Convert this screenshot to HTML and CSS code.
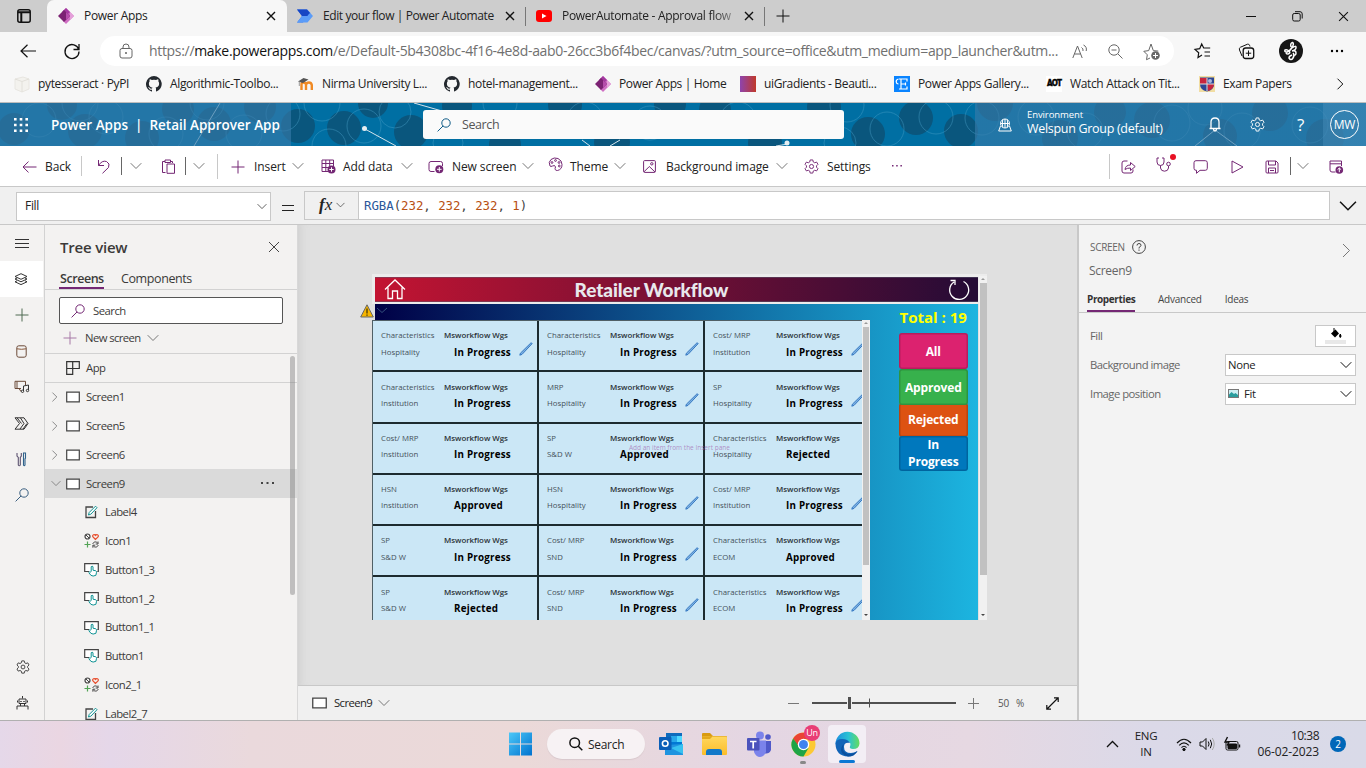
FILE: index.html
```html
<!DOCTYPE html>
<html lang="en">
<head>
<meta charset="utf-8">
<title>Power Apps</title>
<link rel="stylesheet" href="styles.css">
</head>
<body>
<svg class="defs" width="0" height="0">
  <defs>
    <linearGradient id="edgeA" x1="0" y1="0" x2="1" y2="0"><stop offset="0" stop-color="#1d8fe0"/><stop offset=".55" stop-color="#2bc3d2"/><stop offset="1" stop-color="#66dc5c"/></linearGradient>
    <linearGradient id="winG" x1="0" y1="0" x2="1" y2="1"><stop offset="0" stop-color="#4cc8f8"/><stop offset="1" stop-color="#0072cf"/></linearGradient>
    <linearGradient id="fold" x1="0" y1="0" x2="0" y2="1"><stop offset="0" stop-color="#ffd75e"/><stop offset="1" stop-color="#fbbd2a"/></linearGradient>
  </defs>
  <symbol id="x" viewBox="0 0 10 10"><path d="M1 1l8 8M9 1l-8 8"/></symbol>
  <symbol id="down" viewBox="0 0 12 8"><path d="M.7 1.2L6 6.5l5.300-5.300"/></symbol>
  <symbol id="right" viewBox="0 0 8 12"><path d="M1.500.7L6.800 6 1.500 11.300"/></symbol>
  <symbol id="plus" viewBox="0 0 14 14"><path d="M7 .5v13M.5 7h13"/></symbol>
  <symbol id="glass" viewBox="0 0 14 14"><circle cx="9" cy="5" r="4.200"/><path d="M6 8L.6 13.400"/></symbol>
  <symbol id="gear" viewBox="0 0 16 16"><circle cx="8" cy="8" r="2.200"/><path d="M6.600 1h2.800l.5 2.200 1.500.8 2.100-.7 1.400 2.400-1.600 1.600v1.400l1.600 1.600-1.400 2.400-2.100-.7-1.500.8-.5 2.200H6.600l-.5-2.200-1.500-.8-2.100.7-1.400-2.400 1.600-1.600V7.300L1.100 5.700l1.400-2.400 2.100.7 1.500-.8z"/></symbol>
  <symbol id="pa" viewBox="0 0 16 16"><path d="M5.500 2.500L8 0l8 8-8 8-2.500-2.500z" fill="#cf6fc3"/><path d="M8 0l4 4-4 4-4-4z" fill="#a33aa0"/><path d="M6 2l6 6-6 6-6-6z" fill="#7c2273"/><path d="M8 4l4 4-4 4z" fill="#b64cab"/><path d="M12 4l4 4-4 4z" fill="#e5a0da"/></symbol>
  <symbol id="gh" viewBox="0 0 16 16"><path fill="#24292f" d="M8 0a8 8 0 0 0-2.500 15.600c.4.1.5-.2.5-.4v-1.500c-2.200.5-2.700-1-2.700-1-.4-.9-.9-1.200-.9-1.200-.7-.5.100-.5.100-.5.800.1 1.200.8 1.200.8.700 1.200 1.900.9 2.300.7.100-.5.300-.9.500-1.100-1.800-.2-3.600-.9-3.600-4 0-.9.300-1.600.8-2.100-.1-.2-.4-1 .1-2.100 0 0 .7-.2 2.200.8a7.700 7.700 0 0 1 4 0c1.500-1 2.200-.8 2.200-.8.400 1.100.2 1.900.1 2.100.5.600.8 1.300.8 2.100 0 3.100-1.900 3.700-3.600 3.900.3.300.5.800.5 1.500v2.300c0 .2.100.5.500.4A8 8 0 0 0 8 0z"/></symbol>
  <symbol id="scr" viewBox="0 0 14 12"><path d="M.7 1.200h12.600v9.600H.7z" fill="#fff" stroke="#444" stroke-width="1.200"/></symbol>
  <symbol id="lbl" viewBox="0 0 14 14"><path d="M9 2H2v10.500h9.500V6" fill="none" stroke="#444" stroke-width="1.300"/><path d="M4.500 10l.7-2.500L11.500 1.200l1.500 1.500L6.800 9.200z" fill="#fff" stroke="#0c9293"/></symbol>
  <symbol id="ico" viewBox="0 0 15 15"><circle cx="3.500" cy="3.500" r="2.500" fill="none" stroke="#444" stroke-width="1.200"/><path d="M2 2l3 3" stroke="#444"/><path d="M11.500 6.500L8.800 3.700c-.7-2 1.700-2.800 2.700-1.300 1-1.500 3.400-.7 2.700 1.300z" fill="none" stroke="#e8502f" stroke-width="1.200"/><path d="M3.500 8.500v6M.5 11.500h6" stroke="#52a356" stroke-width="1.200"/><path d="M8.800 11c.5-2.500 3.800-2.700 4.900-.8M14 8.500V11h-2.300M14.200 12c-.5 2.500-3.800 2.700-4.900.8M8.900 14.700v-2.500h2.300" fill="none" stroke="#444"/></symbol>
  <symbol id="btn" viewBox="0 0 15 15"><path d="M5 9.500H.7V1.700h13.600v7.800h-1" fill="#fff" stroke="#444" stroke-width="1.200"/><path d="M7.200 9.500V4.700q.9-1 1.800 0v3.500l2.800.6q.9.400.7 1.500l-.6 3q-3 1.500-5 0L4.800 10.500q.7-1 1.500-.4z" fill="#fff" stroke="#0c9293"/></symbol>
  <symbol id="pen" viewBox="0 0 14 14"><path d="M.8 13.200l.6-2L11.800 1q.9-.5 1.300.7L3 12.400z" fill="#7fb2e2" stroke="#2b70bd" stroke-width=".9"/></symbol>
</svg>

<div class="tabs">
  <svg class="i dk" width="14" height="14" viewBox="0 0 14 14"><rect x=".8" y=".8" width="12.400" height="12.400" rx="2" stroke-width="1.500"/><path d="M1 3.200h12M4.300 4v9" stroke-width="2"/></svg>
  <div class="tab active"><svg width="16" height="16"><use href="#pa"/></svg><span>Power Apps</span><svg class="i dk b" width="10" height="10"><use href="#x"/></svg></div>
  <div class="tab"><svg width="16" height="16" viewBox="0 0 16 16"><path d="M0 1.500h10l3.500 3.500L6 14.500H0L5 8z" fill="#2b6ff0"/><path d="M10 1.500L16 8l-5.500 6.500H0L5 8h6z" fill="#5b9cf8"/><path d="M0 1.500h10L13 5l-3 3H5z" fill="#1746c4"/></svg><span class="t2">Edit your flow | Power Automate</span><svg class="i dk b" width="10" height="10"><use href="#x"/></svg></div>
  <div class="tab third"><svg width="16" height="16" viewBox="0 0 16 16"><rect y="2" width="16" height="12" rx="3" fill="#f00"/><path d="M6 5.500v5L10.500 8z" fill="#fff"/></svg><span class="fade">PowerAutomate - Approval flow</span><svg class="i dk b" width="10" height="10"><use href="#x"/></svg></div>
  <svg class="i dk" width="14" height="14"><use href="#plus"/></svg>
  <svg class="i dk" width="10" height="10"><path d="M0 5.500h10"/></svg>
  <svg class="i dk" width="11" height="11" viewBox="0 0 11 11"><rect x=".7" y="2.500" width="7.500" height="7.500" rx="1.500"/><path d="M3 .7h5q2.200 0 2.200 2.200v4.600"/></svg>
  <svg class="i dk" width="11" height="11"><use href="#x"/></svg>
</div>

<div class="address">
  <svg class="i dk" width="16" height="14" viewBox="0 0 16 14"><path d="M16 7H1M7.500.7L1 7l6.500 6.300" stroke-width="1.200"/></svg>
  <svg class="i dk" width="16" height="16" viewBox="0 0 16 16"><path d="M14.700 6.500A7 7 0 1 0 15 8.500M15 1v5.500H9.500" stroke-width="1.300"/></svg>
  <div class="url">
    <svg class="i gr" width="14" height="16" viewBox="0 0 14 16"><rect x="1" y="5.500" width="12" height="9.500" rx="2"/><path d="M4 5.500V4q0-3 3-3t3 3v1.500"/><circle cx="7" cy="10" r=".6" fill="#555"/></svg>
    <span class="url-text">https://<b>make.powerapps.com</b>/e/Default-5b4308bc-4f16-4e8d-aab0-26cc3b6f4bec/canvas/?utm_source=office&amp;utm_medium=app_launcher&amp;utm...</span>
    <svg class="i gr" width="16" height="15" viewBox="0 0 16 15"><path d="M.8 14L5.500 2l4.700 12M2.500 10h6M9.500 3.500q2 1 1.500 3.500M11.500 1q3.700 1.800 2.700 6"/></svg>
    <svg class="i gr" width="15" height="15" viewBox="0 0 15 15"><circle cx="6" cy="6" r="5.200"/><path d="M3.500 6h5M10 10l4.500 4.500"/></svg>
    <svg class="i gr" width="18" height="17" viewBox="0 0 18 17"><path d="M7 15l-3.500 1.700.8-4.900L.8 8.300l4.900-.7L8 1l2.300 6.600 5 .5"/><circle cx="12.500" cy="12.500" r="4.300" fill="#666" stroke="none"/><path d="M12.500 10v5M10 12.500h5" stroke="#fff"/></svg>
  </div>
  <svg class="i dk" width="17" height="16" viewBox="0 0 17 16"><path d="M8 12l-4 2.500.7-4.700L1 6.500l4.700-.8L7.700 1l2 4h6.500M10.500 9H16M10.500 13H16" stroke-width="1.200"/></svg>
  <svg class="i dk" width="17" height="17" viewBox="0 0 17 17"><path d="M4 13L1.500 7q-.8-2 1-2.800L9.500 1.200q1.500-.4 2 1l.5 1.300" /><rect x="5.200" y="5" width="10.500" height="10.500" rx="2.500" stroke-width="1.300"/><path d="M10.500 7.500v5.500M7.800 10.200h5.400"/></svg>
  <svg width="24" height="24" viewBox="0 0 24 24"><circle cx="12" cy="12" r="12" fill="#171717"/><path d="M12 8q-1-4 1.500-4.500 2 1-.5 5T8 13q-3 0-2-2 2-1 4 1t-1 3q-3 0-1-2M13 9q4-3 4-.5T13 12q4-1 4 2t-3 2M14 14q2 2 0 5t-4 0q0-2 3-3" fill="none" stroke="#fff" stroke-width="1.500"/></svg>
  <svg width="14" height="4"><circle cx="2" cy="2" r="1.200"/><circle cx="7" cy="2" r="1.200"/><circle cx="12" cy="2" r="1.200"/></svg>
</div>

<div class="bookmarks">
  <div><svg width="16" height="16" viewBox="0 0 16 16"><path d="M1 3l8-2 6 2v10l-7 3-7-3z" fill="#f3f2ee" stroke="#e8e6e1"/><path d="M1 3l7 2.500L15 3M8 5.500V16" stroke="#e2e0da" fill="none"/></svg><span>pytesseract · PyPI</span></div>
  <div><svg width="16" height="16"><use href="#gh"/></svg><span>Algorithmic-Toolbo...</span></div>
  <div><svg width="16" height="16" viewBox="0 0 16 16"><path d="M3.500 14V8.500q0-2 2-2t2.500 2V14M8.200 8.500q.5-2 2.800-2t2.800 2.500V14M8 8v6" fill="none" stroke="#f08a24" stroke-width="2.400"/><path d="M0 5.500L5.500 2l5 1.500L5 7z" fill="#555"/><path d="M1.300 5.500V10" stroke="#999"/></svg><span>Nirma University L...</span></div>
  <div><svg width="16" height="16"><use href="#gh"/></svg><span>hotel-management...</span></div>
  <div><svg width="16" height="16"><use href="#pa"/></svg><span>Power Apps | Home</span></div>
  <div><i class="ui"></i><span>uiGradients - Beauti...</span></div>
  <div><i class="te"><svg width="16" height="16" viewBox="0 0 16 16" fill="none" stroke="#fff"><path d="M4.500 3Q2 3.500 2.200 6q.3 2 2.300 2M5 3h8v2.500M7 3v10H13V10.500M7 8h4.500M11.500 6.500v3M5 13h3" stroke-width="1.200"/></svg></i><span>Power Apps Gallery...</span></div>
  <div><i class="aot">AOT</i><span>Watch Attack on Tit...</span></div>
  <div><svg width="16" height="16" viewBox="0 0 16 16"><path fill="#f1dda2" d="M0 0h16v16H0z"/><path d="M1 1.500h14V8q0 6-7 7.500Q1 14 1 8z" fill="#2c4694"/><path d="M1 2h7v6H1zM8 8h7q0 5-6 7z" fill="#c7253e"/><path d="M8 2v13M1 8h14" stroke="#ddd"/><circle cx="11" cy="5" r="2" fill="#aab8dd"/></svg><span>Exam Papers</span></div>
  <svg class="i dk" width="8" height="12"><use href="#right"/></svg>
</div>

<div class="header">
  <svg class="pattern" width="1366" height="43" viewBox="0 0 1366 43">
    <g fill="#0a567d"><circle cx="14" cy="26" r="16"/><circle cx="62" cy="2" r="15"/><circle cx="85" cy="28" r="17"/><circle cx="142" cy="35" r="17"/><circle cx="178" cy="6" r="16"/><circle cx="214" cy="21" r="17"/><circle cx="260" cy="4" r="16"/><circle cx="298" cy="23" r="17"/><circle cx="344" cy="25" r="17"/><circle cx="373" cy="0" r="15"/><circle cx="411" cy="29" r="17"/><circle cx="457" cy="3" r="15"/><circle cx="505" cy="42" r="16"/><circle cx="565" cy="2" r="17"/><circle cx="612" cy="39" r="18"/><circle cx="670" cy="1" r="16"/><circle cx="715" cy="7" r="16"/><circle cx="765" cy="40" r="17"/><circle cx="824" cy="4" r="17"/><circle cx="868" cy="31" r="17"/><circle cx="916" cy="15" r="17"/><circle cx="961" cy="28" r="17"/><circle cx="995" cy="0" r="18"/><circle cx="1060" cy="35" r="18"/><circle cx="1110" cy="9" r="16"/><circle cx="1152" cy="17" r="18"/><circle cx="1220" cy="33" r="17"/><circle cx="1270" cy="10" r="18"/><circle cx="1325" cy="35" r="19"/></g>
    <g fill="none" stroke="#4aa0c8" stroke-opacity=".45"><circle cx="39" cy="17" r="17"/><circle cx="106" cy="14" r="17"/><circle cx="80" cy="0" r="18"/><circle cx="166" cy="31" r="17"/><circle cx="207" cy="0" r="17"/><circle cx="244" cy="30" r="18"/><circle cx="283" cy="11" r="17"/><circle cx="322" cy="0" r="18"/><circle cx="329" cy="43" r="17"/><circle cx="364" cy="23" r="17"/><circle cx="395" cy="9" r="16"/><circle cx="448" cy="40" r="15"/><circle cx="500" cy="0" r="17"/><circle cx="585" cy="17" r="18"/><circle cx="650" cy="20" r="17"/><circle cx="738" cy="17" r="18"/><circle cx="840" cy="40" r="16"/><circle cx="887" cy="26" r="17"/><circle cx="847" cy="2" r="17"/><circle cx="936" cy="14" r="17"/><circle cx="982" cy="15" r="17"/><circle cx="1036" cy="14" r="18"/><circle cx="1085" cy="28" r="18"/><circle cx="1172" cy="20" r="18"/><circle cx="1205" cy="5" r="17"/><circle cx="1242" cy="28" r="18"/><circle cx="1310" cy="22" r="18"/></g>
    <g stroke="#d5e4eb" fill="#e5eef2"><path d="M220 0L194 43M365 26L396 43M414 0L442 8M582 37l8 6M620 37l-10 6M788 41l-12 2M1195 43l20-16 22 16" fill="none"/><circle cx="364.500" cy="25.500" r="2.500" stroke="none"/><circle cx="787" cy="40" r="2.500" stroke="none"/></g>
  </svg>
  <div class="brand"><svg width="14" height="14" viewBox="0 0 14 14" fill="#fff"><path d="M0 0h2.600v2.600H0zM5.700 0h2.600v2.600H5.700zM11.400 0H14v2.600h-2.600zM0 5.700h2.600v2.600H0zM5.700 5.700h2.600v2.600H5.700zM11.400 5.700H14v2.600h-2.600zM0 11.400h2.600V14H0zM5.700 11.400h2.600V14H5.700zM11.400 11.400H14V14h-2.600z"/></svg><span>Power Apps&nbsp; |&nbsp; Retail Approver App</span></div>
  <div class="hsearch"><svg class="i bl" width="14" height="14"><use href="#glass"/></svg><span>Search</span></div>
  <div class="henv">
    <svg class="i wh" width="14" height="14" viewBox="0 0 14 14"><circle cx="7" cy="5.500" r="4.500"/><path d="M2.500 5.500h9M7 1v9M4.800 1.500q-1 4 0 8M9.200 1.500q1 4 0 8M2.500 8L.7 13h12.600L11.500 8"/></svg>
    <div class="env"><span class="e1">Environment</span><span class="e2">Welspun Group (default)</span></div>
    <svg class="i wh" width="12" height="15" viewBox="0 0 12 15"><path d="M.5 11.500h11M2 11.500V5q0-4 4-4t4 4v6.500M4.500 12q0 2 1.500 2t1.500-2" stroke-width="1.300"/></svg>
    <svg class="i wh" width="15" height="15" viewBox="0 0 16 16"><use href="#gear"/></svg>
    <span class="q">?</span>
    <div class="me"><span>MW</span></div>
  </div>
</div>

<div class="toolbar">
  <svg class="i pu" width="15" height="12" viewBox="0 0 15 12"><path d="M14.500 6H1M6.500.6L1 6l5.500 5.400"/></svg><span>Back</span><i class="sep"></i>
  <svg class="i pu" width="14" height="15" viewBox="0 0 14 15"><path d="M1.500 1v5.500H7M1.500 6.500Q5 1 9.500 2.500q4 2 2 6L5.500 14.300"/></svg><i class="sep d"></i><svg class="i gy" width="12" height="8"><use href="#down"/></svg>
  <svg class="i pu" width="15" height="15" viewBox="0 0 15 15"><path d="M4.500 13.500h-3V2.500H4M9.500 2.500h2V4M4 1h5.500v2.500H4zM6 5h7.500v9.300H6z"/></svg><i class="sep d"></i><svg class="i gy" width="12" height="8"><use href="#down"/></svg><i class="sep tall"></i>
  <svg class="i pu" width="14" height="14"><use href="#plus"/></svg><span>Insert</span><svg class="i gy" width="12" height="8"><use href="#down"/></svg>
  <svg class="i pu" width="15" height="15" viewBox="0 0 15 15"><path d="M7 12.500H1V1h11.500v6M1 4.500h11.500M1 8.500h7M4.800 1v11.500M8.700 1v6"/><circle cx="10.500" cy="10.500" r="4" fill="#742774" stroke="none"/><path d="M10.500 8.300v4.400M8.300 10.500h4.400" stroke="#fff"/></svg><span>Add data</span><svg class="i gy" width="12" height="8"><use href="#down"/></svg>
  <svg class="i pu" width="16" height="14" viewBox="0 0 16 14"><path d="M6.500 11.500H3q-2 0-2-2v-6q0-2 2-2h9.500q2 0 2 2V6"/><circle cx="11.300" cy="9.300" r="4" fill="#742774" stroke="none"/><path d="M11.300 7v4.600M9 9.300h4.600" stroke="#fff"/></svg><span>New screen</span><svg class="i gy" width="12" height="8"><use href="#down"/></svg>
  <svg class="i pu up" width="15" height="15" viewBox="0 0 15 15"><path d="M2 9Q0 5 3 2.500T10 1.500q4 2 4 6 0 5-4.500 6-3.500 0-2-3.500Q7 7.500 4.500 9q-2 1-2.500 0z"/><circle cx="4" cy="5.500" r=".9"/><circle cx="7.500" cy="3.500" r=".9"/><circle cx="11" cy="5.500" r=".9"/><circle cx="11.300" cy="9" r=".9"/></svg><span>Theme</span><svg class="i gy" width="12" height="8"><use href="#down"/></svg>
  <svg class="i pu" width="13" height="13" viewBox="0 0 13 13"><rect x=".6" y=".6" width="11.800" height="11.800" rx="1"/><path d="M.8 12l5.500-5.500L12 12"/><circle cx="8.800" cy="3.800" r="1.200"/></svg><span>Background image</span><svg class="i gy" width="12" height="8"><use href="#down"/></svg>
  <svg class="i pu" width="15" height="15" viewBox="0 0 16 16"><use href="#gear"/></svg><span>Settings</span>
  <svg width="11" height="3" fill="#742774"><path d="M0 0h1.500v1.500H0zM4.200 0h1.500v1.500H4.200zM8.400 0h1.500v1.500H8.400z"/></svg>
  <i class="sep tall"></i>
  <svg class="i pu" width="15" height="14" viewBox="0 0 15 14"><path d="M6.500 1H3Q1 1 1 3v8q0 2 2 2h7q2 0 2-2v-1.500M4 9.500q.5-4.500 5.500-4.500V2.500l4.700 4-4.700 4V8Q6 8 4 9.500z"/></svg>
  <div class="steth"><svg class="i pu" width="16" height="15" viewBox="0 0 16 15"><path d="M3 1H1v4q0 3.500 3.500 3.500T8 5V1H6M4.500 8.500V11q.5 3.200 4 3.200t4-3.200V9"/><circle cx="12.500" cy="7" r="1.800"/></svg><i class="dot"></i></div>
  <svg class="i pu" width="15" height="14" viewBox="0 0 15 14"><path d="M3 .7h9.300q2 0 2 2v5.600q0 2-2 2H7L3.500 13.300v-3H3q-2 0-2-2V2.700q0-2 2-2z"/></svg>
  <svg class="i pu" width="13" height="14" viewBox="0 0 13 14"><path d="M1 1l11 6-11 6z"/></svg>
  <svg class="i pu" width="14" height="14" viewBox="0 0 14 14"><path d="M1 2q0-1 1-1h9l2 2v9q0 1-1 1H2q-1 0-1-1zM3.500 1v4h7V1M3.500 13V8h7v5M5 10.500h4"/></svg>
  <i class="sep d"></i><svg class="i gy" width="12" height="8"><use href="#down"/></svg>
  <svg class="i pu" width="15" height="14" viewBox="0 0 15 14"><path d="M6.500 12H3q-2 0-2-2V1h11.500v5M1 3.800h11.500"/><circle cx="10.300" cy="10" r="3.800" fill="#742774" stroke="none"/><path d="M10.300 12.200V8M8.500 9.700L10.300 8l1.800 1.700" stroke="#fff"/></svg>
</div>

<div class="formula">
  <div class="prop"><span>Fill</span><svg class="i g6" width="10" height="7" viewBox="0 0 12 8"><use href="#down"/></svg></div>
  <span class="eq"></span>
  <div class="fx"><em><b>f</b>x</em><svg class="i g6" width="9" height="6" viewBox="0 0 12 8"><use href="#down"/></svg></div>
  <div class="code"><span class="fn">RGBA</span>(<span>232</span>, <span>232</span>, <span>232</span>, <span>1</span>)</div>
  <svg class="i dk" width="18" height="12" viewBox="0 0 12 8"><use href="#down"/></svg>
</div>

<div class="main">
  <nav class="rail">
    <div><svg class="i g3" width="14" height="12"><path d="M0 1.500h14M0 5.500h14M0 9.500h14"/></svg></div>
    <div class="on"><svg class="i g3" width="14" height="13" viewBox="0 0 14 13"><path d="M7 .7l6 2.800-6 2.800-6-2.800zM1 6l6 2.800L13 6M1 8.800l6 2.800 6-2.800M1 6l2-1M13 6l-2-1M1 8.800l2-1M13 8.800l-2-1"/></svg></div>
    <div><svg class="i gn" width="14" height="14"><use href="#plus"/></svg></div>
    <div><svg class="i g3" width="11" height="13" viewBox="0 0 11 13"><rect x=".8" y=".8" width="9.400" height="11.400" rx="2" stroke="#6b4a38"/><path d="M1 3.800q4.500 1 9 0" stroke="#8a5a3c"/></svg></div>
    <div><svg class="i g3" width="16" height="14" viewBox="0 0 16 14"><path d="M7 8.500H1V1.300h10.500V5M3 1.500v7M5 8.500l2 3" stroke="#6b4a38"/><path d="M9.500 11V6l5-1v5" stroke="#333"/><circle cx="8.500" cy="11.300" r="1.200"/><circle cx="13.500" cy="10.500" r="1.200"/></svg></div>
    <div><svg class="i g3" width="15" height="13" viewBox="0 0 15 13"><path d="M1 .8h9l4 5.700-4 5.700H1l4.500-5.700zM3 .8l4.500 5.700M6 12l4-5.500L6.500 1M9 12l4-5.500"/></svg></div>
    <div><svg class="i g3" width="11" height="15" viewBox="0 0 11 15"><path d="M1 1v3l1.300 1.500V13q1 1.500 2 0V5.500L5.300 4V1" stroke="#5c5370" stroke-width="1.100"/><path d="M7.500 1h2v5l-.5 1v6q-.8 1.500-1.500 0z" stroke="#31638c" stroke-width="1.100"/></svg></div>
    <div><svg class="i blu" width="14" height="14"><use href="#glass"/></svg></div>
    <div class="r1"><svg class="i g3" width="14" height="14" viewBox="0 0 16 16"><use href="#gear"/></svg></div>
    <div class="r2"><svg class="i g3" width="13" height="14" viewBox="0 0 13 14"><path d="M6.500 0v2.500M3 3h7v4.500H3zM1.500 4.500v2M11.500 4.500v2M1 13.500V10h11v3.500M4.500 10v-2M8.500 10V8"/><path d="M5 5v1M8 5v1" stroke-width="1.500"/></svg></div>
  </nav>

  <aside class="tree">
    <div class="thead"><span>Tree view</span><svg class="i g6" width="12" height="12" viewBox="0 0 12 12"><path d="M1 1l10 10M11 1L1 11"/></svg></div>
    <div class="ttabs"><span class="on">Screens</span><span>Components</span></div>
    <div class="tsearch"><svg class="i pu" width="14" height="14"><use href="#glass"/></svg><span>Search</span></div>
    <div class="tnew"><svg class="i pl" width="14" height="14"><use href="#plus"/></svg><span>New screen</span><svg class="i gy" width="12" height="8"><use href="#down"/></svg></div>
    <div class="tapp"><svg class="i g3" width="14" height="14" viewBox="0 0 14 14"><path d="M.7.700h12.600v6.800H.7zM.7.700v12.600h6V.7" stroke-width="1.200"/></svg><span>App</span></div>
    <div class="list">
      <div class="row"><svg class="i gy" width="7" height="10" viewBox="0 0 8 12"><use href="#right"/></svg><svg width="14" height="12"><use href="#scr"/></svg><span>Screen1</span></div>
      <div class="row"><svg class="i gy" width="7" height="10" viewBox="0 0 8 12"><use href="#right"/></svg><svg width="14" height="12"><use href="#scr"/></svg><span>Screen5</span></div>
      <div class="row"><svg class="i gy" width="7" height="10" viewBox="0 0 8 12"><use href="#right"/></svg><svg width="14" height="12"><use href="#scr"/></svg><span>Screen6</span></div>
      <div class="row sel"><svg class="i gy" width="10" height="7" viewBox="0 0 12 8"><use href="#down"/></svg><svg width="14" height="12"><use href="#scr"/></svg><span>Screen9</span><svg width="13" height="3" fill="#444"><path d="M0 0h2v2H0zM5.500 0h2v2h-2zM11 0h2v2h-2z"/></svg></div>
      <div class="row kid"><svg width="14" height="14"><use href="#lbl"/></svg><span>Label4</span></div>
      <div class="row kid"><svg width="15" height="15"><use href="#ico"/></svg><span>Icon1</span></div>
      <div class="row kid"><svg width="15" height="15"><use href="#btn"/></svg><span>Button1_3</span></div>
      <div class="row kid"><svg width="15" height="15"><use href="#btn"/></svg><span>Button1_2</span></div>
      <div class="row kid"><svg width="15" height="15"><use href="#btn"/></svg><span>Button1_1</span></div>
      <div class="row kid"><svg width="15" height="15"><use href="#btn"/></svg><span>Button1</span></div>
      <div class="row kid"><svg width="15" height="15"><use href="#ico"/></svg><span>Icon2_1</span></div>
      <div class="row kid"><svg width="14" height="14"><use href="#lbl"/></svg><span>Label2_7</span></div>
    </div>
    <i class="tscroll"></i>
  </aside>

  <section class="center">
    <div class="canvas">
      <div class="app">
        <div class="screen">
          <div class="bar">
            <svg class="i home" width="22" height="21" viewBox="0 0 22 21"><path d="M1 10.500L11 1l10 9.500M4 8.500V19.500h4.500V12h5v7.500H18V8.500" stroke-width="1.300"/></svg>
            <span>Retailer Workflow</span>
            <svg class="i home" width="22" height="22" viewBox="0 0 22 22"><path d="M15.500 2.500A9.500 9.500 0 1 1 6 3M2.500 1.500H7V6" stroke-width="1.300"/></svg>
          </div>
          <div class="body">
            <div class="gallery">
              <div class="cells">
                <div class="cell"><span>Characteristics</span><b>Msworkflow Wgs</b><span>Hospitality</span><strong>In Progress</strong><svg width="14" height="14"><use href="#pen"/></svg></div>
                <div class="cell"><span>Characteristics</span><b>Msworkflow Wgs</b><span>Hospitality</span><strong>In Progress</strong><svg width="14" height="14"><use href="#pen"/></svg></div>
                <div class="cell"><span>Cost/ MRP</span><b>Msworkflow Wgs</b><span>Institution</span><strong>In Progress</strong><svg width="14" height="14"><use href="#pen"/></svg></div>
                <div class="cell"><span>Characteristics</span><b>Msworkflow Wgs</b><span>Institution</span><strong>In Progress</strong></div>
                <div class="cell"><span>MRP</span><b>Msworkflow Wgs</b><span>Hospitality</span><strong>In Progress</strong><svg width="14" height="14"><use href="#pen"/></svg></div>
                <div class="cell"><span>SP</span><b>Msworkflow Wgs</b><span>Hospitality</span><strong>In Progress</strong><svg width="14" height="14"><use href="#pen"/></svg></div>
                <div class="cell"><span>Cost/ MRP</span><b>Msworkflow Wgs</b><span>Institution</span><strong>In Progress</strong></div>
                <div class="cell"><span>SP</span><b>Msworkflow Wgs</b><span>S&amp;D W</span><strong>Approved</strong></div>
                <div class="cell"><span>Characteristics</span><b>Msworkflow Wgs</b><span>Hospitality</span><strong>Rejected</strong></div>
                <div class="cell"><span>HSN</span><b>Msworkflow Wgs</b><span>Institution</span><strong>Approved</strong></div>
                <div class="cell"><span>HSN</span><b>Msworkflow Wgs</b><span>Hospitality</span><strong>In Progress</strong><svg width="14" height="14"><use href="#pen"/></svg></div>
                <div class="cell"><span>Cost/ MRP</span><b>Msworkflow Wgs</b><span>Institution</span><strong>In Progress</strong><svg width="14" height="14"><use href="#pen"/></svg></div>
                <div class="cell"><span>SP</span><b>Msworkflow Wgs</b><span>S&amp;D W</span><strong>In Progress</strong></div>
                <div class="cell"><span>Cost/ MRP</span><b>Msworkflow Wgs</b><span>SND</span><strong>In Progress</strong><svg width="14" height="14"><use href="#pen"/></svg></div>
                <div class="cell"><span>Characteristics</span><b>Msworkflow Wgs</b><span>ECOM</span><strong>Approved</strong></div>
                <div class="cell"><span>SP</span><b>Msworkflow Wgs</b><span>S&amp;D W</span><strong>Rejected</strong></div>
                <div class="cell"><span>Cost/ MRP</span><b>Msworkflow Wgs</b><span>SND</span><strong>In Progress</strong><svg width="14" height="14"><use href="#pen"/></svg></div>
                <div class="cell"><span>Characteristics</span><b>Msworkflow Wgs</b><span>ECOM</span><strong>In Progress</strong><svg width="14" height="14"><use href="#pen"/></svg></div>
              </div>
              <div class="vs"><i class="ua"></i><i class="th1"></i><i class="da"></i></div>
            </div>
            <div class="filters">
              <div class="total">Total : 19</div>
              <div class="f all">All</div><div class="f appr">Approved</div><div class="f rej">Rejected</div><div class="f prog">In<br>Progress</div>
            </div>
          </div>
        </div>
        <div class="vs outer"><i class="ua"></i><i class="th2"></i><i class="da"></i></div>
        <svg class="warn" width="28" height="14" viewBox="0 0 28 14"><path d="M7 .8L13.300 13H.7z" fill="#f7b500" stroke="#666" stroke-width="1"/><path d="M7 4.500v5M7 10.500v1.300" stroke="#4a3a00" stroke-width="1.300"/><path d="M17 4l5 4.500L27 4" fill="none" stroke="#34507c"/></svg>
        <span class="hint">Add an item from the Insert pane</span>
      </div>
    </div>
    <div class="status">
      <svg width="15" height="12" viewBox="0 0 14 12" preserveAspectRatio="none"><use href="#scr"/></svg><span>Screen9</span><svg class="i gy" width="12" height="8"><use href="#down"/></svg>
      <svg class="i gy" width="11" height="3"><path d="M0 1.500h11"/></svg>
      <svg width="144" height="14" viewBox="0 0 144 14"><path d="M0 6h144v2H0z" fill="#505050"/><path d="M35 0h5v14h-5z" fill="#f0f0f0"/><path d="M36 1h3v12h-3zM57 2.500h1v9h-1z" fill="#505050"/></svg>
      <svg class="i gy" width="11" height="11"><path d="M5.500 0v11M0 5.500h11"/></svg>
      <span class="sm">50</span><span class="sm">%</span>
      <svg class="i dk" width="13" height="13" viewBox="0 0 13 13"><path d="M1 12L12 1M8 .8h4.200V5M.8 8v4.200H5" stroke-width="1.200"/></svg>
    </div>
  </section>

  <aside class="props">
    <div class="p1"><span>SCREEN</span><svg class="i g6" width="14" height="14" viewBox="0 0 14 14"><circle cx="7" cy="7" r="6.400"/><path d="M5 5.500q0-2 2-2t2 1.800Q9 6.500 7 7.500v1M7 9.500v1.300"/></svg><svg class="i gy pchev" width="9" height="15" viewBox="0 0 9 15"><path d="M1 1l6.500 6.500L1 14"/></svg></div>
    <div class="p2">Screen9</div>
    <div class="p3"><span class="on">Properties</span><span>Advanced</span><span>Ideas</span></div>
    <div class="pr"><span>Fill</span><div class="fillbox"><svg width="12" height="11" viewBox="0 0 12 11"><path d="M1 5.500L5.500 1.500 9 5.500 5 9.500z"/><path d="M4 0v4M10.300 6q1.500 2.500 0 3.500-1.500-1 0-3.500" stroke="#000" fill="#000"/></svg><i></i></div></div>
    <div class="pr"><span>Background image</span><div class="sel2"><span>None</span><svg class="i dk" width="12" height="8"><use href="#down"/></svg></div></div>
    <div class="pr"><span>Image position</span><div class="sel2"><svg width="11" height="9" viewBox="0 0 11 9"><rect x=".5" y=".5" width="10" height="8" fill="#cdeef2" stroke="#777"/><path d="M1 8V5.500L3.500 3 6 5l1.500-1L10 6v2z" fill="#2a9d9d"/></svg><span>Fit</span><svg class="i dk" width="12" height="8"><use href="#down"/></svg></div></div>
  </aside>
</div>

<footer class="taskbar">
  <svg width="24" height="24" viewBox="0 0 24 24"><path d="M1 .500h11v11H1zM13 .5h11v11H13zM1 12.500h11v11H1zM13 12.500h11v11H13z" fill="url(#winG)"/></svg>
  <div class="wsearch"><svg class="i dk" width="14" height="14" viewBox="0 0 14 14"><circle cx="5.700" cy="5.700" r="4.800" stroke-width="1.500"/><path d="M9.300 9.300l4 4" stroke-width="1.500"/></svg><span>Search</span></div>
  <svg width="25" height="24" viewBox="0 0 25 24"><path d="M7 1h16v15H7z" fill="#0f6cbd"/><path d="M12 4h6v6h-6z" fill="#28a8ea"/><path d="M18 4h5v6h-5z" fill="#50d9ff"/><path d="M12 10h11v4H12z" fill="#0078d4"/><path d="M6 13l18-1v11H6z" fill="#1f94e0"/><path d="M24 12v10l-12-6z" fill="#37c2f0"/><rect y="5" width="12.500" height="13" rx="1" fill="#0a5fb8"/><circle cx="6.200" cy="11.500" r="2.800" fill="none" stroke="#fff" stroke-width="1.600"/></svg>
  <svg width="26" height="23" viewBox="0 0 26 23"><path d="M0 1q0-1 1-1h7l3 3h13q1 0 1 1v5H0z" fill="#d99a10"/><rect y="3.500" width="25" height="18.500" rx="1" fill="url(#fold)"/><path d="M0 6V3.500h8l2-1.500v2L8 6z" fill="#e3a81b"/><path d="M4 22v-3q0-3 3-3h10q3 0 3 3v3z" fill="#1278c9"/></svg>
  <svg width="25" height="26" viewBox="0 0 25 26"><circle cx="13" cy="4.500" r="4" fill="#7b83eb"/><circle cx="21" cy="6" r="2.800" fill="#5059c9"/><path d="M16 10h8v9q-2 5-8 3z" fill="#5059c9"/><path d="M7 9.500h12V21q-2 5-6 5t-6-5z" fill="#7b83eb"/><rect y="7" width="12.500" height="12.500" rx="1" fill="#4b53bc"/><path d="M3 10.500h6.500M6.200 10.500v7" stroke="#fff" stroke-width="1.700"/></svg>
  <div class="chrome"><svg width="25" height="25" viewBox="0 0 25 25"><circle cx="12.500" cy="12.500" r="12" fill="#fcc934"/><path d="M12.500 7H23A12 12 0 0 0 2.100 6.500l5.700 9z" fill="#ea4335"/><path d="M2.100 6.500A12 12 0 0 0 12.500 24.500l5-8.500-9-1z" fill="#1ea446"/><circle cx="12.500" cy="12.500" r="5.700" fill="#fff"/><circle cx="12.500" cy="12.500" r="4.500" fill="#3f82ee"/></svg><i>Un</i><b></b></div>
  <div class="edge"><svg width="25" height="26" viewBox="0 0 25 26"><path d="M.5 13A12 12 0 0 1 24.500 12.500q-.5 5.500-6.500 5.500-4-.3-3-2.500 1.500-4-2-5.500-5 0-6 6-3-1-6.500-3z" fill="url(#edgeA)"/><path d="M.5 13Q1 8 7 8q6 0 8 4-6-1-6 4 0 6 7 6 3 0 6.500-2-3 5.500-9.500 5.500-12-.5-12.500-12.500z" fill="#1264b8"/><path d="M9 13q-3 5 1 8.500 4 4 12.500-1.500-3 5.500-9.500 5.500-9-3-6.500-9Q7 14 9 13z" fill="#0b4f9e"/></svg><b></b></div>
  <svg class="i dk" width="13" height="8" viewBox="0 0 13 8"><path d="M1 7l5.500-5.500L12 7" stroke-width="1.300"/></svg>
  <div class="lang"><span>ENG</span><span>IN</span></div>
  <svg class="i dk" width="16" height="13" viewBox="0 0 16 13"><path d="M1 5q7-7.500 14 0M3.200 7.300q4.800-5 9.600 0M5.500 9.600q2.500-2.700 5 0" stroke-width="1.200"/><circle cx="8" cy="11.500" r="1.200" fill="#111"/></svg>
  <svg class="i dk" width="16" height="14" viewBox="0 0 16 14"><path d="M1 5h2.500L7 1.500v11L3.500 9H1zM9.300 4.500q1.500 2.500 0 5M11.300 2.800q2.800 4.200 0 8.400"/><path d="M13.300 1q3.800 6 0 12" stroke="#aaa"/></svg>
  <svg class="i dk" width="17" height="15" viewBox="0 0 17 15"><rect x="2" y="4.500" width="12" height="8.500" rx="1.500"/><path d="M4 7h8.500v4.500H4z" fill="#111"/><path d="M15.500 7.500v3M3.500 0L1 5h4L3 8.500" stroke-width="1.400"/></svg>
  <div class="clock"><span>10:38</span><span>06-02-2023</span></div>
  <span class="note">2</span>
</footer>
</body>
</html>
```
FILE: styles.css
```css
* { box-sizing: border-box; }
body {
  margin: 0; width: 1366px; height: 768px; overflow: hidden;
  font-family: "Open Sans", "Noto Sans", sans-serif; font-size: 12px; line-height: 1;
  letter-spacing: -0.3px; color: #222; background: #f7f7f7;
  display: flex; flex-direction: column;
}
span { white-space: nowrap; }
svg { display: block; flex: none; overflow: visible; }
i, em { font-style: normal; display: block; }
.defs { position: absolute; }
.i { fill: none; stroke: currentColor; stroke-width: 1; }
.dk { color: #111; } .gr { color: #666; } .gy { color: #777; } .g6 { color: #444; }
.g3 { color: #333; } .pu { color: #742774; } .pl { color: #a678a6; } .wh { color: #fff; } .bl { color: #0f5b87; }
.gn { color: #4e6b52; } .blu { color: #3a5f80; }
.b { stroke-width: 1.4; }
.up { margin-top: -4px; }

/* browser chrome */
.tabs {
  height: 32px; background: #cdcdcd; padding-left: 17px; flex: none;
  display: grid; align-items: center;
  grid-template-columns: 30px 240px 239px 239px 481px 46px 46px 20px;
}
.tabs > svg:nth-of-type(2) { margin-left: 11px; }
.tab { height: 32px; display: grid; grid-template-columns: 26px 182px 14px; align-items: center; padding-left: 10px; }
.active { background: #f7f7f7; border-radius: 7px 7px 0 0; padding-left: 11px; }
.tab + .tab { background: linear-gradient(#777, #777) right 0 center / 1px 19px no-repeat; }
.t2 { letter-spacing: -.4px; }
.fade { -webkit-mask-image: linear-gradient(90deg, #000 150px, rgba(0, 0, 0, .35) 172px); line-height: 16px; }
.address {
  height: 38px; flex: none; padding-left: 20px;
  display: grid; align-items: center;
  grid-template-columns: 44px 36px 1094px 44px 41px 51px 20px;
}
.url {
  width: 1074px; height: 30px; border-radius: 15px; background: #fff; padding-left: 19px;
  display: grid; align-items: center; grid-template-columns: 30px 923px 36px 35px 20px;
}
.url-text { font-size: 14px; letter-spacing: -.318px; color: #707070; }
.url-text b { font-weight: 400; color: #111; }
.bookmarks {
  height: 33px; flex: none; padding: 0 0 4px 14px; border-bottom: 1px solid #bdbdbd;
  display: grid; align-items: center; letter-spacing: -.35px;
  grid-template-columns: 132px 152px 146px 151px 145px 154px 152px 153px 137px 10px;
}
.bookmarks > div { display: flex; gap: 8px; align-items: center; }
.bookmarks i { width: 16px; height: 16px; }
.ui { background: linear-gradient(90deg, #8e44ad, #c0392b); }
.te { background: #0a84ff; }
.aot { background: #fff; font: 700 8px/15px "DejaVu Sans Condensed", "DejaVu Sans", sans-serif; letter-spacing: -.8px; text-align: center; color: #000; -webkit-text-stroke: .4px #000; }

/* app header */
.header { height: 43px; flex: none; background: #006fa3; position: relative; display: flex; align-items: center; color: #fff; }
.pattern { position: absolute; left: 0; top: 0; overflow: hidden; }
.brand {
  position: relative; width: 291px; height: 43px; background: rgba(53, 122, 169, .66); margin-right: 132px;
  display: grid; grid-template-columns: 37px auto; align-items: center; padding-left: 14px;
  font-size: 13.500px; font-weight: 600; letter-spacing: 0;
}
.brand span { padding-top: 2px; }
.hsearch {
  position: relative; width: 421px; height: 29px; border-radius: 3px; background: #fafafa; color: #555; margin-right: 131px;
  display: grid; grid-template-columns: 25px auto; align-items: center; padding-left: 14px; font-size: 12.500px; letter-spacing: -.4px;
}
.hsearch span { padding-top: 2px; }
.henv {
  position: relative; width: 391px; height: 43px; background: linear-gradient(90deg, rgba(53, 122, 169, .66) 348px, rgba(64, 134, 180, .8) 348px);
  display: grid; grid-template-columns: 29px 182px 41px 47px 33px 30px; align-items: center; padding-left: 23px;
}
.env { display: flex; flex-direction: column; margin-top: -5px; }
.e1 { font-size: 9.500px; line-height: 13px; letter-spacing: -.1px; }
.e2 { font-size: 12.500px; line-height: 15px; }
.q { font-size: 17px; }
.me { width: 29px; height: 29px; border: 1px solid #fff; border-radius: 50%; display: grid; place-items: center; font-size: 12px; }

/* command bar */
.toolbar {
  height: 41px; flex: none; background: #fff; border-bottom: 1px solid #c8c8c8; padding: 1px 0 0 22px;
  display: grid; align-items: center; font-size: 12px; letter-spacing: -.1px;
  grid-template-columns: 23px 36px 16px 24px 10px 30px 24px 9px 23px 14px 23px 39px 28px 22px 59px 26px 24px 71px 25px 22px 45px 28px 23px 111px 27px 23px 65px 217px 12px 35px 37px 38px 34px 25px 8px 31px 20px;
}
.toolbar .gy { margin: -1px 0 0 -1px; }
.sep { width: 1px; height: 20px; background: #c8c8c8; margin-top: -1px; }
.sep.d { height: 18px; background: #666; } .sep.tall { height: 25px; }
.steth { display: flex; align-items: flex-start; margin-top: -4px; }
.dot { width: 6px; height: 6px; border-radius: 50%; background: #e81123; margin: -3px 0 0 -2px; }

/* formula bar */
.formula {
  height: 38px; flex: none; background: #f0f0f0; border-bottom: 1px solid #c8c8c8; padding-left: 16px;
  display: grid; grid-template-columns: 266px 22px 55px 980px 20px; align-items: center;
}
.prop { width: 255px; height: 29px; border: 1px solid #c8c8c8; background: #fff; display: flex; justify-content: space-between; align-items: center; padding: 0 3px 0 8px; margin-top: 1px; }
.eq { width: 12px; height: 6px; border: solid #222; border-width: 1.500px 0; margin-top: 4px; }
.fx { height: 29px; border: 1px solid #c8c8c8; display: flex; align-items: center; padding-left: 14px; gap: 4px; margin-top: -1px; }
.fx em { font: italic 17px/20px "Liberation Serif", serif; letter-spacing: 0; }
.code { width: 971px; height: 29px; margin-top: -1px; border: 1px solid #c8c8c8; border-left: 0; background: #fff; padding-left: 5px; font: 12.400px/27px "DejaVu Sans Mono", monospace; letter-spacing: -.05px; white-space: pre; color: #444; }
.code span { color: #b75012; } .code .fn { color: #2b579a; }

.main { flex: none; height: 496px; display: grid; grid-template-columns: 45px 253px 779px 289px; border-bottom: 1px solid #b0b0b0; }
.rail { background: #f3f2f1; border-right: 1px solid #d2d2d2; height: 495px; display: flex; flex-direction: column; }
.rail div { height: 36px; flex: none; display: flex; align-items: center; justify-content: center; padding-right: 1px; }
.rail div:first-child { padding-top: 2px; }
.rail .on { background: #fff; margin-right: 1px; }
.rail .r1 { margin-top: auto; padding: 1px 0 0 1px; }
.rail .r2 { padding: 1px 0 0 1px; }

/* tree */
.tree { background: #f3f2f1; height: 495px; overflow: hidden; position: relative; display: flex; flex-direction: column; border-right: 1px solid #d8d8d8; font-size: 11.300px; letter-spacing: -.5px; color: #3b3a39; }
.tree > div { flex: none; }
.thead { height: 44px; padding: 0 17px 0 15px; display: flex; justify-content: space-between; align-items: center; font-size: 15px; font-weight: 600; letter-spacing: -.2px; color: #3b3a39; }
.ttabs { height: 21px; display: flex; gap: 17px; padding-left: 14px; border-bottom: 1px solid #d2d2d2; line-height: 20px; font-size: 12.500px; letter-spacing: -.4px; }
.ttabs .on { font-weight: 600; width: 45px; border-bottom: 2px solid #742774; letter-spacing: -.45px; padding-left: 1px; }
.tsearch { margin: 7px 0 0 14px; width: 224px; height: 27px; background: #fff; border: 1px solid #555; border-radius: 2px; display: grid; grid-template-columns: 22px auto; padding-left: 11px; align-items: center; }
.tnew { height: 30px; border-bottom: 1px solid #d2d2d2; display: grid; grid-template-columns: 22px 62px 20px; padding: 0 0 1px 18px; align-items: center; }
.tnew span { letter-spacing: -.6px; }
.tapp { height: 29px; border-bottom: 1px solid #d2d2d2; display: grid; grid-template-columns: 20px auto; padding-left: 21px; align-items: center; }
.row { height: 28.830px; display: grid; grid-template-columns: 14px 20px 175px 20px; align-items: center; padding: 0 0 .5px 7px; }
.row:first-child { padding-bottom: 1.500px; }
.row > svg:first-child { margin-left: -1px; }
.sel { background: #dadada; }
.kid { grid-template-columns: 20px auto; padding: 0 0 2px 40px; }
.tscroll { position: absolute; left: 245px; top: 131px; width: 5px; height: 239px; border-radius: 3px; background: rgba(120, 120, 120, .42); }

/* canvas */
.center { display: flex; flex-direction: column; }
.canvas { height: 460px; padding: 49px 0 0 74px; background: #e0e0e0; box-shadow: inset 10px 0 12px -10px #c8c8c8; }
.app { position: relative; width: 615px; height: 346px; display: flex; background: linear-gradient(#ececec, #ececec) 0 0 / 100% 30px no-repeat; }
.screen { width: 606px; padding-top: 3px; letter-spacing: 0; }
.bar { height: 25px; margin-left: 3px; background: linear-gradient(90deg, #c31432, #240b36); border: solid rgba(90, 90, 110, .5); border-width: 1px 0; display: flex; align-items: center; justify-content: space-between; padding: 0 8px 0 9px; color: #e8e8ec; font: 900 19px/24px Lato, sans-serif; letter-spacing: -.08px; }
.bar span { margin-right: 51px; }
.home { color: #fff; }
.body { height: 316px; margin: 2px 0 0 3px; width: 603px; background: linear-gradient(90deg, #000046, #1cb5e0); display: grid; grid-template-columns: 495px 108px; }
.gallery { margin: 16px 0 0 -3px; width: 498px; height: 300px; display: grid; grid-template-columns: 490px 8px; }
.cells { overflow: hidden; display: grid; grid-template-columns: 166px 166px 166px; grid-auto-rows: 51.300px; border-top: 1px solid #506066; border-left: 1px solid #506066; }
.cell {
  background: #cbe7f6; border-right: 2px solid #1d2b2f; border-bottom: 2px solid #1d2b2f; padding: 6.700px 0 0 8px; color: #45515a; font-size: 7.800px;
  display: grid; grid-template-columns: 63px 10px 65px 14px; grid-template-rows: 17px 15.600px; align-items: center;
}
.cell b { grid-column: 2 / 4; font-weight: 600; font-size: 7.900px; color: #2b3339; white-space: nowrap; letter-spacing: -.03px; }
.cell span { grid-column: 1; }
.cell strong { grid-column: 3; font-size: 9.800px; font-weight: 700; letter-spacing: .22px; color: #000; white-space: nowrap; }
.cell svg { margin-top: -7px; }
.vs { background: #f1f1f1; display: flex; flex-direction: column; align-items: center; height: 300px; }
.outer { width: 8px; margin: 2px 0 0 1px; height: 344px; }
.th1 { width: 6px; height: 238px; background: #c1c1c1; margin: 3px 0 auto; }
.th2 { width: 7px; height: 292px; background: #c1c1c1; margin: 3px 0 auto; }
.ua, .da { border: 2px solid transparent; margin-top: 0; border-bottom-color: #999; }
.da { border-bottom-color: transparent; border-top-color: #444; margin-bottom: 2px; }
.filters { padding: 3px 10px 0 28.500px; color: #fff; font-weight: 700; text-align: center; }
.total { color: #ff0; font-size: 15px; line-height: 20px; height: 26px; white-space: nowrap; }
.f { height: 36px; border-radius: 3px; display: grid; place-items: center; font-size: 12px; line-height: 17px; letter-spacing: -.15px; box-shadow: inset 0 0 0 1.500px rgba(0, 0, 0, .16); }
.all { background: #dc226f; } .appr { background: #37b14c; position: relative; }
.rej { background: #dd5212; height: 34px; margin-top: -2px; padding-bottom: 2px; } .prog { background: #0078bd; height: 35px; margin-top: -1px; padding-bottom: 2px; }
.warn { position: absolute; left: -12px; top: 30px; }
.hint { position: absolute; left: 257px; top: 171px; font-size: 6.500px; letter-spacing: 0; color: rgba(160, 90, 170, .65); }
.status { height: 35px; background: #f0f0f0; border-top: 1px solid #c8c8c8; padding-left: 14px; display: grid; align-items: center; font-size: 11.300px; letter-spacing: -.6px; grid-template-columns: 22px 44px 410px 24px 156px 30px 18px 30px 20px; }
.sm { font-size: 10px; letter-spacing: -.3px; color: #555; }

/* properties */
.props { background: #f3f3f3; border-left: 2px solid #c8c8c8; color: #666; font-size: 11.300px; }
.p1 { height: 36px; padding: 8px 0 0 11px; display: grid; grid-template-columns: 42px 210px 12px; align-items: center; font-size: 10px; }
.pchev { margin-top: 6px; }
.p2 { height: 20px; line-height: 20px; padding-left: 10px; font-size: 12px; }
.p3 { height: 32px; padding: 8px 0 0 8px; border-bottom: 1px solid #c8c8c8; display: flex; gap: 23px; line-height: 20px; font-size: 10px; color: #444; letter-spacing: -.24px; }
.p3 .on { width: 48px; font-weight: 700; color: #333; border-bottom: 2px solid #742774; letter-spacing: -.38px; }
.pr { height: 29px; padding: 0 10px 0 11px; display: flex; justify-content: space-between; align-items: center; letter-spacing: -.52px; }
.p3 + .pr { margin-top: 8px; }
.fillbox { width: 41px; height: 22px; border: 1px solid #c8c8c8; background: #fff; display: flex; flex-direction: column; align-items: center; padding-top: 2px; }
.fillbox i { width: 21px; height: 4px; background: #e8e8e8; margin-top: 1px; }
.sel2 { width: 131px; height: 22px; border: 1px solid #c8c8c8; background: #fff; color: #222; display: flex; align-items: center; gap: 5px; padding: 0 3px 0 2px; letter-spacing: -.3px; }
.sel2 > svg:last-child { margin-left: auto; }

/* taskbar */
.taskbar {
  flex: 1; padding: 0 0 1px 508px; background: linear-gradient(90deg, #e5d8e9 0, #ead6e2 60px, #e5d7e9 110px, #ead9dc 250px, #ebd9d8 520px, #e4d6e3 760px, #e6d8e2 970px, #dbd9e8 1150px, #d9dae8);
  display: grid; align-items: center;
  grid-template-columns: 39px 112px 43px 45px 44px 37px 278px 28px 42px 23px 25px 32px 63px 11px 20px;
}
.wsearch { width: 98px; height: 30px; border-radius: 15px; background: #f7f2f4; display: flex; align-items: center; padding-left: 22px; gap: 5px; box-shadow: 0 1px 1px #d8c8cc; }
.wsearch span { padding-top: 1px; }
.chrome, .edge { position: relative; }
.chrome i { position: absolute; left: 13px; top: -7px; width: 16px; height: 16px; border-radius: 8px; background: #e93d75; color: #fff; font-size: 9px; line-height: 16px; text-align: center; }
.chrome b, .edge b { position: absolute; left: 9px; top: 29px; width: 6px; height: 3px; border-radius: 2px; background: #888; }
.edge { width: 38px; height: 38px; border-radius: 4px; background: #f3eef5; display: grid; place-items: center; }
.edge b { left: 11px; top: 35px; width: 16px; background: #0a78d4; }
.lang { width: 24px; text-align: center; line-height: 16px; font-size: 11.500px; display: grid; }
.clock { text-align: right; line-height: 16px; font-size: 12px; letter-spacing: -.1px; display: grid; justify-items: end; }
.clock span:first-child { letter-spacing: -.5px; }
.note { width: 16px; height: 16px; border-radius: 8px; background: #0067b8; color: #fff; font-size: 10px; line-height: 16px; text-align: center; grid-column: 15; }
```
